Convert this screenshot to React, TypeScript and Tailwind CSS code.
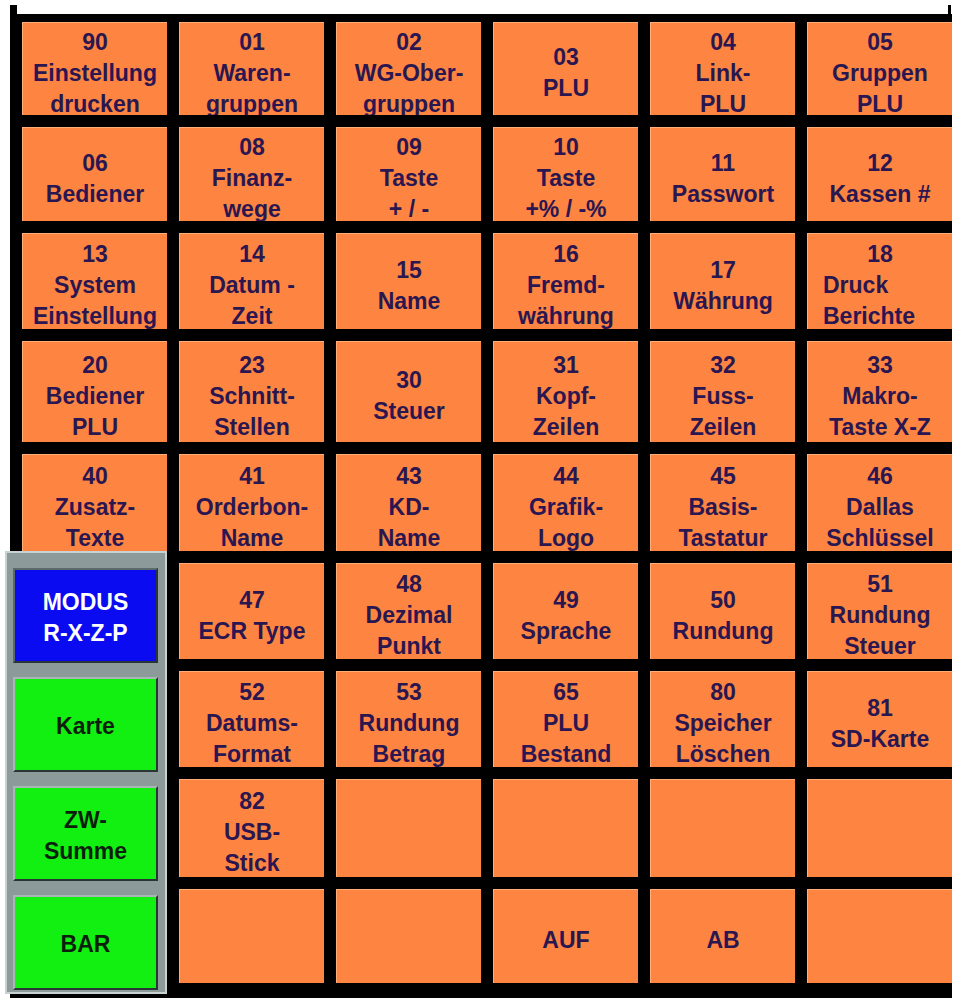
// Programmier-Menü der Kasse: Tastenfeld mit Funktionsnummern und Modus-Leiste
type Taste = { lines: string[]; left?: boolean } | null;

const t = (...lines: string[]): Taste => ({ lines });

// Reihen 1-5: volle Breite (6 Spalten)
const obereTasten: Taste[] = [
  t('90', 'Einstellung', 'drucken'),
  t('01', 'Waren-', 'gruppen'),
  t('02', 'WG-Ober-', 'gruppen'),
  t('03', 'PLU'),
  t('04', 'Link-', 'PLU'),
  t('05', 'Gruppen', 'PLU'),

  t('06', 'Bediener'),
  t('08', 'Finanz-', 'wege'),
  t('09', 'Taste', '+ / -'),
  t('10', 'Taste', '+% / -%'),
  t('11', 'Passwort'),
  t('12', 'Kassen #'),

  t('13', 'System', 'Einstellung'),
  t('14', 'Datum -', 'Zeit'),
  t('15', 'Name'),
  t('16', 'Fremd-', 'währung'),
  t('17', 'Währung'),
  { lines: ['18', 'Druck', 'Berichte'], left: true },

  t('20', 'Bediener', 'PLU'),
  t('23', 'Schnitt-', 'Stellen'),
  t('30', 'Steuer'),
  t('31', 'Kopf-', 'Zeilen'),
  t('32', 'Fuss-', 'Zeilen'),
  t('33', 'Makro-', 'Taste X-Z'),

  t('40', 'Zusatz-', 'Texte'),
  t('41', 'Orderbon-', 'Name'),
  t('43', 'KD-', 'Name'),
  t('44', 'Grafik-', 'Logo'),
  t('45', 'Basis-', 'Tastatur'),
  t('46', 'Dallas', 'Schlüssel'),
];

// Reihen 6-9: Spalten 2-6 (Spalte 1 = Modus-Leiste)
const untereTasten: Taste[] = [
  t('47', 'ECR Type'),
  t('48', 'Dezimal', 'Punkt'),
  t('49', 'Sprache'),
  t('50', 'Rundung'),
  t('51', 'Rundung', 'Steuer'),

  t('52', 'Datums-', 'Format'),
  t('53', 'Rundung', 'Betrag'),
  t('65', 'PLU', 'Bestand'),
  t('80', 'Speicher', 'Löschen'),
  t('81', 'SD-Karte'),

  t('82', 'USB-', 'Stick'),
  null,
  null,
  null,
  null,

  null,
  null,
  t('AUF'),
  t('AB'),
  null,
];

function OrangeTaste({ taste }: { taste: Taste }) {
  return (
    <button className="flex flex-col items-center justify-center overflow-hidden bg-[#fd8441] border-t border-l border-[#ffae78] pt-[8px] text-[23px] leading-[31px] font-bold text-[#2a1650]">
      {taste?.lines.map((line, i) => (
        <span
          key={i}
          className={
            taste.left && i > 0
              ? 'block w-full whitespace-nowrap pl-[15px] text-left'
              : 'block w-full whitespace-nowrap text-center'
          }
        >
          {line}
        </span>
      ))}
    </button>
  );
}

function ModusTaste({ lines, farbe }: { lines: string[]; farbe: 'blau' | 'gruen' }) {
  return (
    <button
      className={
        farbe === 'blau'
          ? 'flex h-[95px] flex-col items-center justify-center border-2 border-t-[#5a6a6a] border-l-[#5a6a6a] border-r-[#2b3535] border-b-[#2b3535] bg-[#0b0bf2] pt-[4px] text-[23px] leading-[31px] font-bold text-white'
          : 'flex h-[95px] flex-col items-center justify-center border-2 border-t-[#a9b6b6] border-l-[#a9b6b6] border-r-[#2b3535] border-b-[#2b3535] bg-[#12f012] pt-[4px] text-[23px] leading-[31px] font-bold text-[#0c1f0c]'
      }
    >
      {lines.map((line) => (
        <span key={line}>{line}</span>
      ))}
    </button>
  );
}

export default function App() {
  return (
    <div className="min-h-screen bg-white pt-[5px] pl-[10px] font-['Liberation_Sans',Arial,sans-serif]">
      {/* Randmarken oben links/rechts */}
      <div className="flex h-[9px] w-[942px] justify-between">
        <div className="w-[7px] bg-black" />
        <div className="mr-[1px] w-[3px] bg-black" />
      </div>

      <div className="w-[942px] bg-black pt-[8px] pl-[12px] pb-[15px]">
        <div className="grid grid-cols-[repeat(6,145px)] grid-rows-[93px_94px_96px_101px_97px_96px_96px_98px_94px] gap-[12px]">
          {obereTasten.map((taste, i) => (
            <OrangeTaste key={`o${i}`} taste={taste} />
          ))}

          {/* Modus-Leiste links unten */}
          <div className="col-start-1 row-start-6 row-span-4 -ml-[17px] -mt-[12px] -mb-[11px] flex flex-col gap-[14px] border-2 border-[#c9d2d2] bg-[#8d9a9a] pt-[15px] pl-[6px] pr-[7px]">
            <ModusTaste farbe="blau" lines={['MODUS', 'R-X-Z-P']} />
            <ModusTaste farbe="gruen" lines={['Karte']} />
            <ModusTaste farbe="gruen" lines={['ZW-', 'Summe']} />
            <ModusTaste farbe="gruen" lines={['BAR']} />
          </div>

          {untereTasten.map((taste, i) => (
            <OrangeTaste key={`u${i}`} taste={taste} />
          ))}
        </div>
      </div>
    </div>
  );
}
